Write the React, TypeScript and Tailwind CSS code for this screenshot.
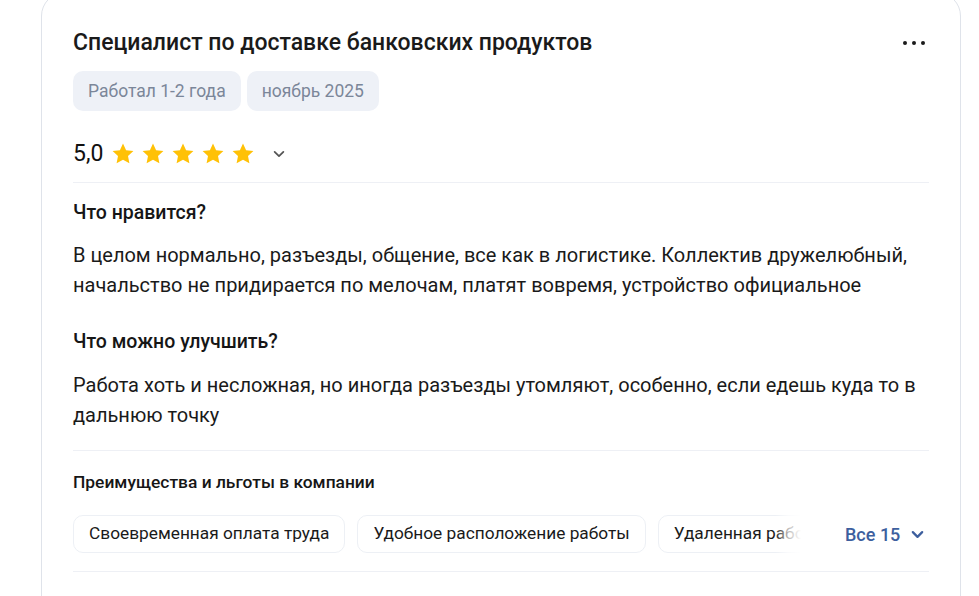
import React from "react";

const Star = () => (
  <svg width="24" height="24" viewBox="0 0 24 24" className="shrink-0">
    <path
      d="M12 1.5l3.1 6.7 7.3.9-5.4 5 1.4 7.2L12 17.8l-6.4 3.5 1.4-7.2-5.4-5 7.3-.9z"
      fill="#FFC107"
    />
  </svg>
);

const Chevron = ({ color, size = 14, sw = 2.2 }: { color: string; size?: number; sw?: number }) => (
  <svg width={size} height={size} viewBox="0 0 16 16" fill="none">
    <path d="M3 5.5l5 5 5-5" stroke={color} strokeWidth={sw} strokeLinecap="round" strokeLinejoin="round" />
  </svg>
);

export default function App() {
  const chips = ["Своевременная оплата труда", "Удобное расположение работы", "Удаленная работа"];
  return (
    <div className="w-[979px] h-[596px] overflow-hidden bg-white" style={{ fontFamily: "Roboto, 'Noto Sans', sans-serif" }}>
      <div className="ml-[41px] mt-[-8px] w-[920px] h-[640px] rounded-[24px] border border-[#dfe3ea] bg-white px-[31px] pt-[36px]">
        <div className="flex items-start justify-between">
          <h1 className="text-[23px] leading-[28px] font-medium text-[#1a1a1a]">
            Специалист по доставке банковских продуктов
          </h1>
          <div className="mt-[12px] mr-[4px] flex gap-[5px]">
            <span className="block h-[4px] w-[4px] rounded-full bg-[#1a1a1a]" />
            <span className="block h-[4px] w-[4px] rounded-full bg-[#1a1a1a]" />
            <span className="block h-[4px] w-[4px] rounded-full bg-[#1a1a1a]" />
          </div>
        </div>

        <div className="mt-[14px] flex gap-[6px]">
          <span className="flex h-[40px] items-center rounded-[10px] bg-[#eef1f7] px-[15px] text-[17.5px] text-[#7b8699]">
            Работал 1-2 года
          </span>
          <span className="flex h-[40px] items-center rounded-[10px] bg-[#eef1f7] px-[15px] text-[17.5px] text-[#7b8699]">
            ноябрь 2025
          </span>
        </div>

        <div className="mt-[27px] flex h-[32px] items-center">
          <span className="text-[23px] text-[#111] mr-[8px]">5,0</span>
          <div className="flex gap-[6px]">
            <Star />
            <Star />
            <Star />
            <Star />
            <Star />
          </div>
          <span className="ml-[17px] flex items-center">
            <Chevron color="#555" size={14} sw={2} />
          </span>
        </div>

        <div className="mt-[12px] h-px bg-[#eef0f5]" />

        <h3 className="mt-[18px] text-[19.5px] leading-[24px] font-medium text-[#161616]">Что нравится?</h3>
        <p className="mt-[15px] text-[20px] leading-[30px] text-[#1a1a1a]">
          В целом нормально, разъезды, общение, все как в логистике. Коллектив дружелюбный, начальство не придирается по мелочам, платят вовремя, устройство официальное
        </p>

        <h3 className="mt-[30px] text-[19.5px] leading-[24px] font-medium text-[#161616]">Что можно улучшить?</h3>
        <p className="mt-[16px] text-[20px] leading-[30px] text-[#1a1a1a]">
          Работа хоть и несложная, но иногда разъезды утомляют, особенно, если едешь куда то в дальнюю точку
        </p>

        <div className="mt-[20px] h-px bg-[#eef0f5]" />

        <h4 className="mt-[20px] text-[17.4px] leading-[22px] font-medium text-[#161616]">Преимущества и льготы в компании</h4>

        <div className="mt-[22px] flex items-center">
          <div className="relative w-[728px] overflow-hidden">
            <div className="flex gap-[12px]">
              {chips.map((c) => (
                <span
                  key={c}
                  className="flex h-[38px] shrink-0 items-center whitespace-nowrap rounded-[10px] border border-[#edf0f5] px-[15px] text-[17.3px] text-[#1a1a1a]"
                >
                  {c}
                </span>
              ))}
            </div>
            <div className="absolute right-0 top-0 h-full w-[26px] bg-gradient-to-l from-white via-white/70 to-transparent" />
          </div>
          <button className="ml-[44px] flex items-center gap-[10px] text-[18px] font-medium text-[#3d5f9e]">
            Все 15
            <Chevron color="#3d5f9e" size={15} sw={2.4} />
          </button>
        </div>

        <div className="mt-[18px] h-px bg-[#eef0f5]" />
      </div>
    </div>
  );
}
